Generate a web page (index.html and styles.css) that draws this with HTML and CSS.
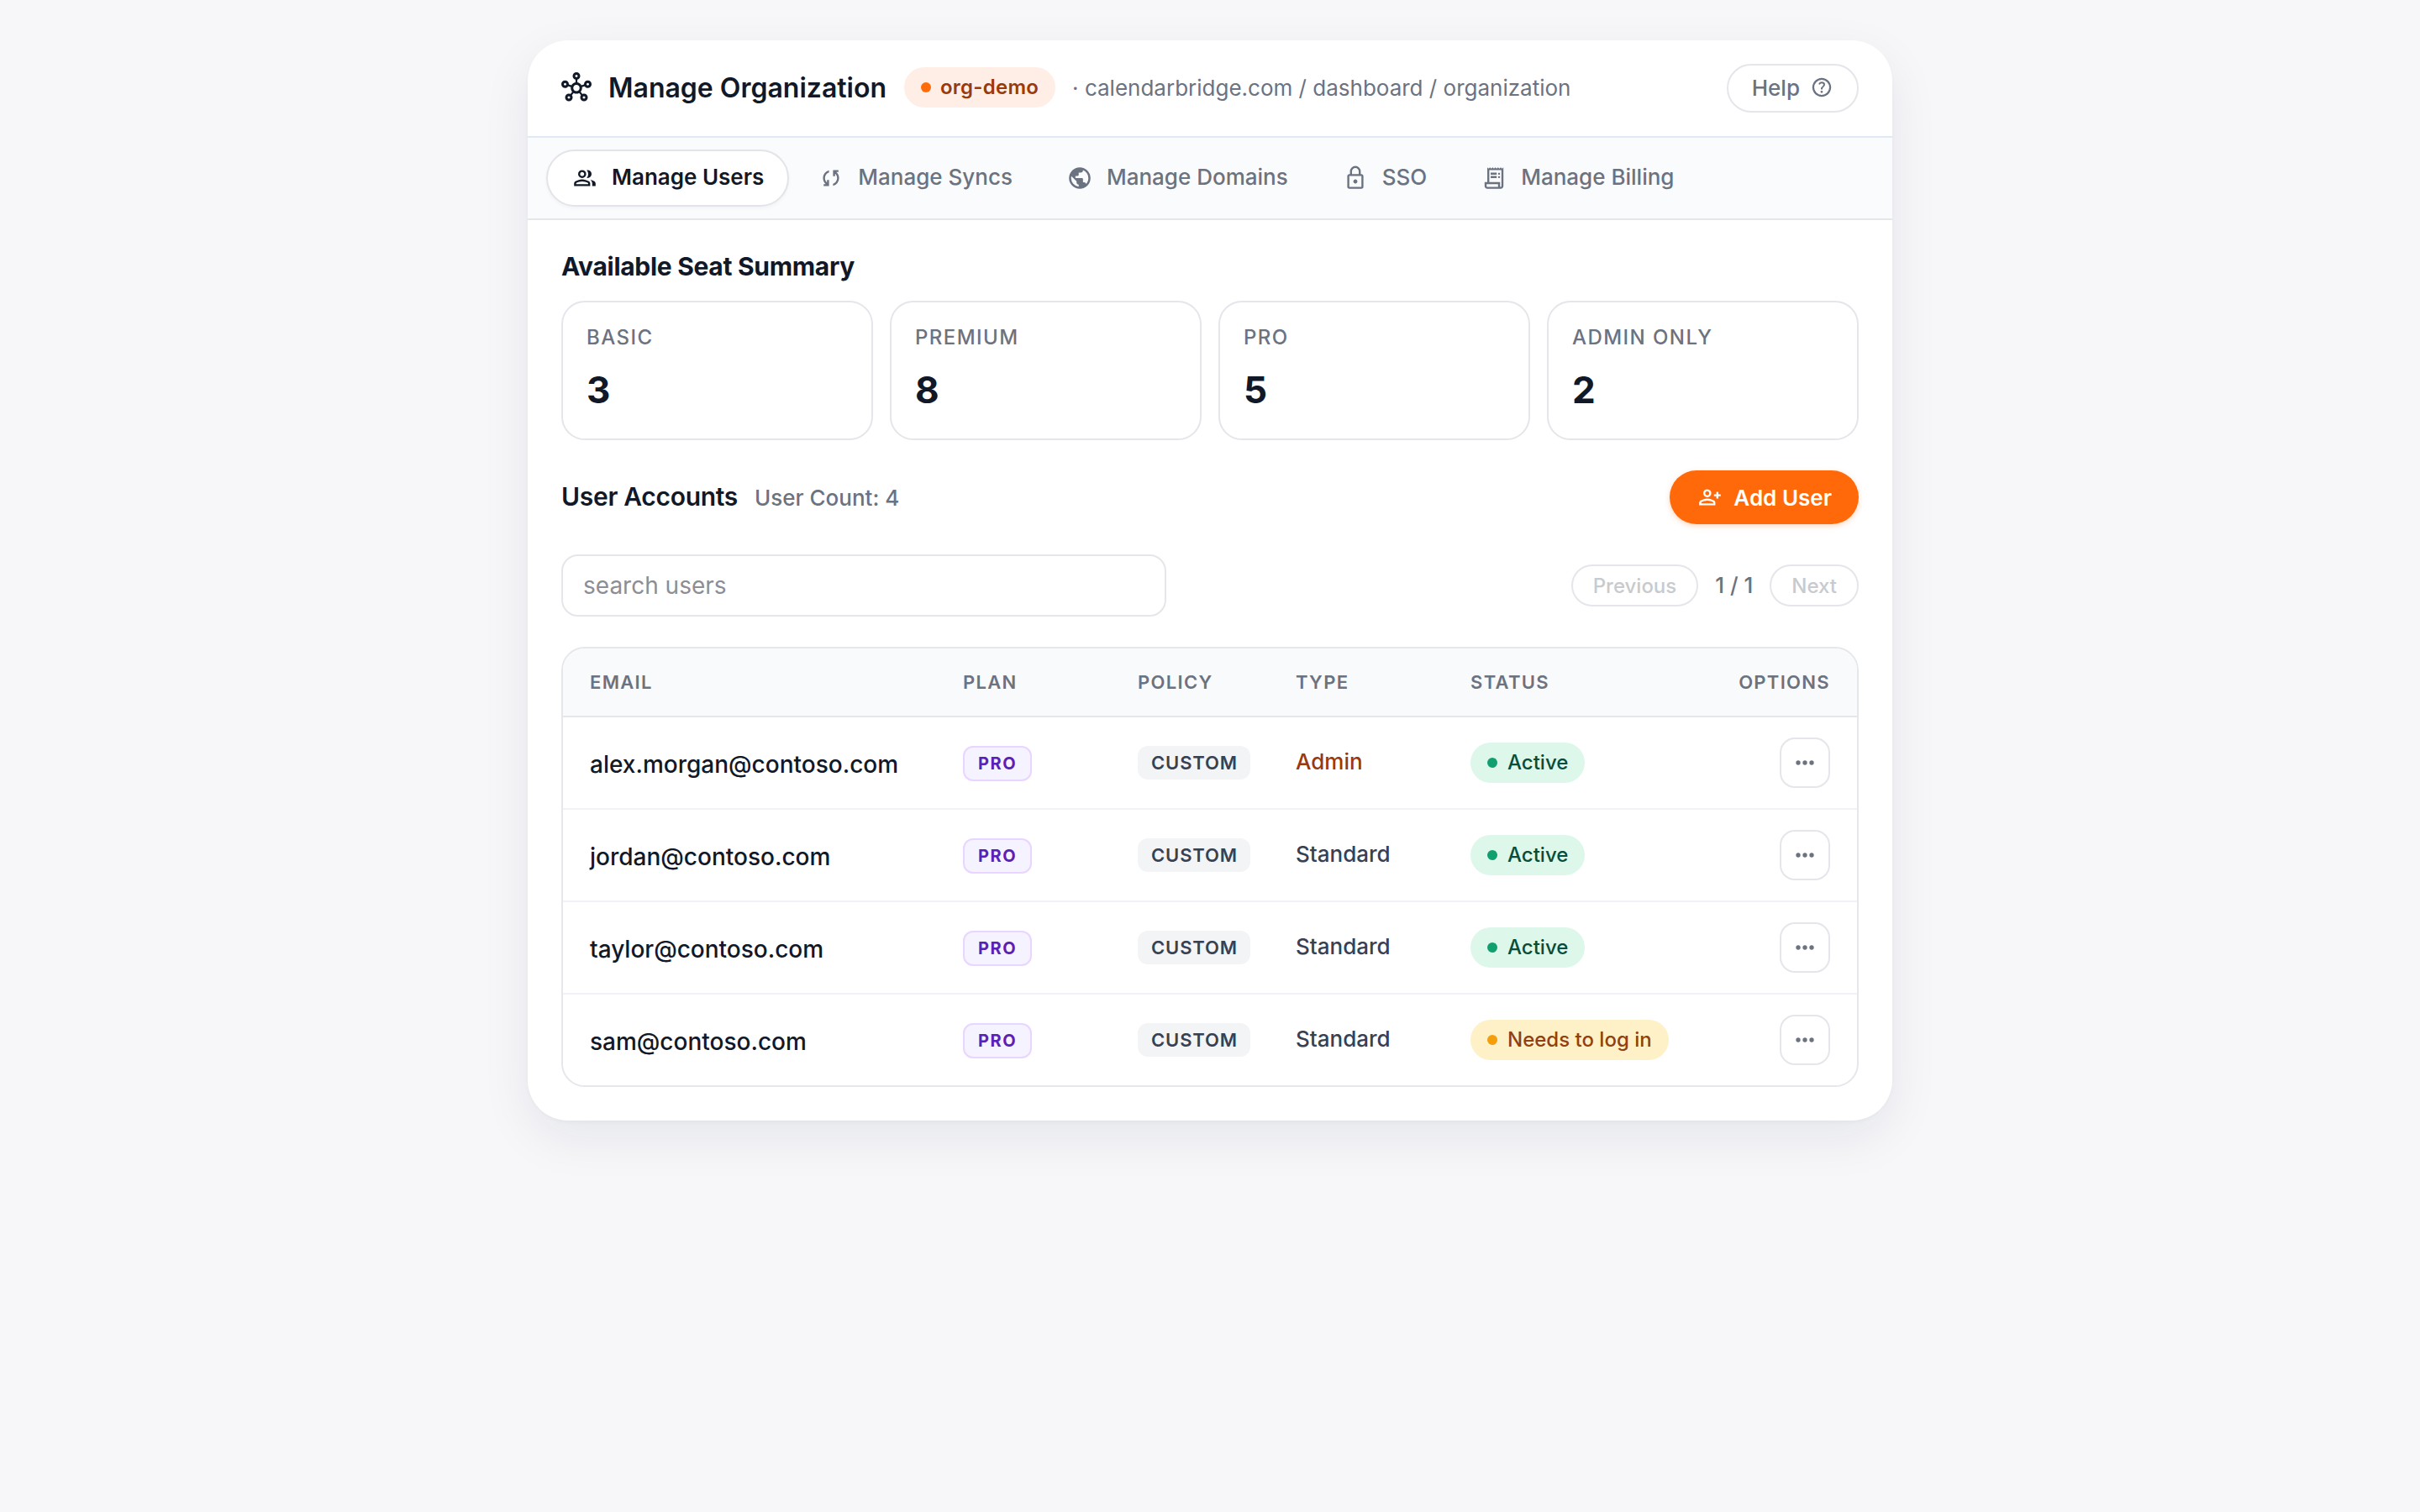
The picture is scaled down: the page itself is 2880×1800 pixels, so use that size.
FILE: index.html
```html
<!DOCTYPE html>
<html lang="en">
<head>
<meta charset="utf-8">
<title>Manage Organization</title>
<link rel="stylesheet" href="styles.css">
</head>
<body>
<svg class="sprite" aria-hidden="true">
  <symbol id="i-hub" viewBox="0 -960 960 960"><path d="M240-40q-50 0-85-35t-35-85q0-50 35-85t85-35q14 0 26 3t23 8l57-71q-28-31-39-70t-5-78l-81-27q-17 25-43 40t-58 15q-50 0-85-35T0-580q0-50 35-85t85-35q50 0 85 35t35 85v8l81 28q20-36 53.5-61t75.5-32v-87q-39-11-64.5-42.5T360-840q0-50 35-85t85-35q50 0 85 35t35 85q0 42-26 73.5T510-724v87q42 7 75.5 32t53.5 61l81-28v-8q0-50 35-85t85-35q50 0 85 35t35 85q0 50-35 85t-85 35q-32 0-58.5-15T739-515l-81 27q6 39-5 77.5T614-340l57 70q11-5 23-7.5t26-2.5q50 0 85 35t35 85q0 50-35 85t-85 35q-50 0-85-35t-35-85q0-20 6.5-38.5T624-232l-57-71q-41 23-87.5 23T392-303l-56 71q11 15 17.5 33.5T360-160q0 50-35 85t-85 35ZM120-540q17 0 28.5-11.5T160-580q0-17-11.5-28.5T120-620q-17 0-28.5 11.5T80-580q0 17 11.5 28.5T120-540Zm120 420q17 0 28.5-11.5T280-160q0-17-11.5-28.5T240-200q-17 0-28.5 11.5T200-160q0 17 11.5 28.5T240-120Zm240-680q17 0 28.5-11.5T520-840q0-17-11.5-28.5T480-880q-17 0-28.5 11.5T440-840q0 17 11.5 28.5T480-800Zm0 440q42 0 71-29t29-71q0-42-29-71t-71-29q-42 0-71 29t-29 71q0 42 29 71t71 29Zm240 240q17 0 28.5-11.5T760-160q0-17-11.5-28.5T720-200q-17 0-28.5 11.5T680-160q0 17 11.5 28.5T720-120Zm120-420q17 0 28.5-11.5T880-580q0-17-11.5-28.5T840-620q-17 0-28.5 11.5T800-580q0 17 11.5 28.5T840-540Z"/></symbol>
  <symbol id="i-help" viewBox="-20 -980 1000 1000"><path d="M478-240q21 0 35.5-14.5T528-290q0-21-14.5-35.5T478-340q-21 0-35.5 14.5T428-290q0 21 14.5 35.5T478-240Zm-36-154h74q0-33 7.5-52t42.5-52q26-26 41-49.5t15-56.5q0-56-41-86t-97-30q-57 0-92.5 30T342-618l66 26q5-18 22.5-39t53.5-21q32 0 48 17.5t16 38.5q0 20-12 37.5T506-526q-44 39-54 59t-10 73Zm38 314q-83 0-156-31.5T197-197q-54-54-85.5-127T80-480q0-83 31.5-156T197-763q54-54 127-85.5T480-880q83 0 156 31.5T763-763q54 54 85.5 127T880-480q0 83-31.5 156T763-197q-54 54-127 85.5T480-80Zm0-80q134 0 227-93t93-227q0-134-93-227t-227-93q-134 0-227 93t-93 227q0 134 93 227t227 93Z"/></symbol>
  <symbol id="i-group" viewBox="0 -960 960 960"><path d="M96-192v-92q0-26 12.500-47.500T143-366q55-32 116-49t125-17q64 0 125 17t116 49q22 13 34.500 34.500T672-284v92H96Zm648 0v-92q0-42-19.500-78T672-421q39 8 75.500 21.500T817-366q22 13 34.500 34.500T864-284v92H744Zm-360-288q-60 0-102-42t-42-102q0-60 42-102t102-42q60 0 102 42t42 102q0 60-42 102t-102 42Zm336-144q0 60-42 102t-102 42q-8 0-15-.5t-15-2.500q25-29 39.500-64.500T600-624q0-41-14.500-76.500T546-765q8-2 15-2.500t15-.5q60 0 102 42t42 102ZM168-264h432v-20q0-6-3-11.500t-8-8.500q-47-27-99-41.500T384-360q-54 0-106 14t-99 42q-5 3-8 8t-3 12v20Zm216-288q30 0 51-21t21-51q0-30-21-51t-51-21q-30 0-51 21t-21 51q0 30 21 51t51 21Z"/></symbol>
  <symbol id="i-sync" viewBox="0 -960 960 960"><path d="M216-192v-72h74q-45-40-71.500-95.500T192-480q0-101 61-178.500T408-758v75q-63 23-103.500 77.500T264-480q0 48 19.500 89t52.500 70v-94h72v223H216Zm336-10v-75q63-23 103.500-77.500T696-480q0-48-19.500-89T624-639v94h-72v-223h192v72h-74q45 40 71.500 95.500T768-480q0 101-61 178.500T552-202Z"/></symbol>
  <symbol id="i-globe" viewBox="-20 -980 1000 1000"><path d="M480-80q-83 0-156-31.5T197-197q-54-54-85.5-127T80-480q0-83 31.5-156T197-763q54-54 127-85.5T480-880q83 0 156 31.5T763-763q54 54 85.5 127T880-480q0 83-31.5 156T763-197q-54 54-127 85.5T480-80Zm-40-82v-78q-33 0-56.5-23.5T360-320v-40L168-552q-3 18-5.5 36t-2.5 36q0 121 79.5 212T440-162Zm276-102q20-22 36-47.5t26.5-53q10.5-27.5 16-56.5t5.5-59q0-98-54.5-179T600-776v16q0 33-23.5 56.5T520-680h-80v80q0 17-11.5 28.5T400-560h-80v80h240q17 0 28.5 11.5T600-440v120h40q26 0 47 15.5t29 40.5Z"/></symbol>
  <symbol id="i-lock" viewBox="0 -960 960 960"><path d="M264-96q-30 0-51-21t-21-51v-384q0-30 21-51t51-21h24v-96q0-80 56-136t136-56q80 0 136 56t56 136v96h24q30 0 51 21t21 51v384q0 30-21 51t-51 21H264Zm0-72h432v-384H264v384Zm216-120q30 0 51-21t21-51q0-30-21-51t-51-21q-30 0-51 21t-21 51q0 30 21 51t51 21ZM360-624h240v-96q0-50-35-85t-85-35q-50 0-85 35t-35 85v96Z"/></symbol>
  <symbol id="i-receipt" viewBox="0 -960 960 960"><path fill-rule="evenodd" d="M240-96q-40 0-68-28t-28-68v-144h96v-528l48 48 48-48 48 48 48-48 48 48 48-48 48 48 48-48 48 48 48-48 48 48 48-48v672q0 40-28 68t-68 28H240Zm480-72q10 0 17-7t7-17v-576H312v432h384v144q0 10 7 17t17 7ZM360-600v-72h216v72H360Zm0 120v-72h216v72H360Zm300-120q-15 0-25.500-10.500T624-636q0-15 10.500-25.500T660-672q15 0 25.500 10.500T696-636q0 15-10.500 25.500T660-600Zm0 120q-15 0-25.500-10.500T624-516q0-15 10.500-25.500T660-552q15 0 25.500 10.500T696-516q0 15-10.500 25.500T660-480ZM240-168h384v-96H216v72q0 10 7 17t17 7Z"/></symbol>
  <symbol id="i-add" viewBox="0 -960 960 960"><path d="M708-432v-84h-84v-72h84v-84h72v84h84v72h-84v84h-72Zm-324-48q-60 0-102-42t-42-102q0-60 42-102t102-42q60 0 102 42t42 102q0 60-42 102t-102 42ZM96-192v-92q0-26 12.500-47.500T143-366q55-32 116-49t125-17q64 0 125 17t116 49q22 13 34.500 34.500T672-284v92H96Zm72-72h432v-20q0-6-3-11.500t-8-8.500q-47-27-99-41.500T384-360q-54 0-106 14t-99 42q-5 3-8 8t-3 12v20Zm216-288q30 0 51-21t21-51q0-30-21-51t-51-21q-30 0-51 21t-21 51q0 30 21 51t51 21Z"/></symbol>
  <symbol id="i-more" viewBox="0 0 24 24"><circle cx="6" cy="12" r="2"/><circle cx="12" cy="12" r="2"/><circle cx="18" cy="12" r="2"/></symbol>
</svg>
<main class="card">
  <header class="header">
    <svg class="hub"><use href="#i-hub"/></svg>
    <h1 class="title">Manage Organization</h1>
    <span class="org"><i class="dot"></i><span class="pill-text">org-demo</span></span>
    <span class="crumbs">· calendarbridge.com / dashboard / organization</span>
    <button class="help">Help<svg class="help-icon"><use href="#i-help"/></svg></button>
  </header>
  <nav class="tabs">
    <a class="tab active"><svg class="icon"><use href="#i-group"/></svg><span class="tab-text">Manage Users</span></a>
    <a class="tab"><svg class="icon"><use href="#i-sync"/></svg><span class="tab-text">Manage Syncs</span></a>
    <a class="tab"><svg class="icon"><use href="#i-globe"/></svg><span class="tab-text">Manage Domains</span></a>
    <a class="tab"><svg class="icon"><use href="#i-lock"/></svg><span class="tab-text">SSO</span></a>
    <a class="tab"><svg class="icon"><use href="#i-receipt"/></svg><span class="tab-text">Manage Billing</span></a>
  </nav>
  <section class="content">
    <h2 class="heading">Available Seat Summary</h2>
    <div class="seats">
      <div class="seat"><span class="seat-label">BASIC</span><span class="seat-value">3</span></div>
      <div class="seat"><span class="seat-label">PREMIUM</span><span class="seat-value">8</span></div>
      <div class="seat"><span class="seat-label">PRO</span><span class="seat-value">5</span></div>
      <div class="seat"><span class="seat-label">ADMIN ONLY</span><span class="seat-value">2</span></div>
    </div>
    <div class="accounts">
      <div class="accounts-title"><h2 class="heading accounts-heading">User Accounts</h2><span class="count">User Count: 4</span></div>
      <button class="add"><svg class="icon"><use href="#i-add"/></svg>Add User</button>
    </div>
    <div class="toolbar">
      <input class="search" type="text" placeholder="search users">
      <div class="pager"><button class="page" disabled>Previous</button><span class="pages">1 / 1</span><button class="page" disabled>Next</button></div>
    </div>
    <div class="table-wrap">
      <table class="table">
        <colgroup><col class="c-email"><col class="c-plan"><col class="c-policy"><col class="c-type"><col><col class="c-options"></colgroup>
        <thead>
          <tr><th>EMAIL</th><th>PLAN</th><th>POLICY</th><th>TYPE</th><th>STATUS</th><th class="right">OPTIONS</th></tr>
        </thead>
        <tbody>
          <tr><td class="email">alex.morgan@contoso.com</td><td><span class="plan">PRO</span></td><td><span class="policy">CUSTOM</span></td><td class="type admin">Admin</td><td><span class="status ok"><i class="dot"></i><span class="pill-text">Active</span></span></td><td><button class="more" aria-label="Options"><svg class="more-icon"><use href="#i-more"/></svg></button></td></tr>
          <tr><td class="email">jordan@contoso.com</td><td><span class="plan">PRO</span></td><td><span class="policy">CUSTOM</span></td><td class="type">Standard</td><td><span class="status ok"><i class="dot"></i><span class="pill-text">Active</span></span></td><td><button class="more" aria-label="Options"><svg class="more-icon"><use href="#i-more"/></svg></button></td></tr>
          <tr><td class="email">taylor@contoso.com</td><td><span class="plan">PRO</span></td><td><span class="policy">CUSTOM</span></td><td class="type">Standard</td><td><span class="status ok"><i class="dot"></i><span class="pill-text">Active</span></span></td><td><button class="more" aria-label="Options"><svg class="more-icon"><use href="#i-more"/></svg></button></td></tr>
          <tr><td class="email">sam@contoso.com</td><td><span class="plan">PRO</span></td><td><span class="policy">CUSTOM</span></td><td class="type">Standard</td><td><span class="status warn"><i class="dot"></i><span class="pill-text">Needs to log in</span></span></td><td><button class="more" aria-label="Options"><svg class="more-icon"><use href="#i-more"/></svg></button></td></tr>
        </tbody>
      </table>
    </div>
  </section>
</main>
</body>
</html>
```
FILE: styles.css
```css
* { box-sizing: border-box; }
body {
  margin: 0;
  min-height: 100vh;
  padding-top: 48px;
  background: #f7f7fa;
  color: #111827;
  font-family: Inter, "Liberation Sans", sans-serif;
  font-size: 26px;
}
svg { display: block; flex: none; fill: currentColor; }
.sprite { display: none; }
button, input { font: inherit; margin: 0; }

.card {
  width: 1624px;
  margin: 0 auto;
  background: #fff;
  border-radius: 48px;
  overflow: hidden;
  box-shadow: 0 20px 60px rgba(17, 24, 39, .075), 0 2px 4px rgba(17, 24, 39, .03);
}

.header {
  display: flex;
  align-items: center;
  height: 116px;
  padding: 0 40px;
  border-bottom: 2px solid #e0e9f5;
}
.hub { width: 36px; height: 36px; margin-bottom: 2px; }
.title { margin: 0 0 0 20px; font-size: 32px; font-weight: 600; line-height: 40px; white-space: nowrap; }
.org {
  display: flex;
  align-items: center;
  gap: 11px;
  height: 48px;
  margin: 0 20px 2px 21px;
  padding: 0 20px;
  border-radius: 24px;
  background: #ffeee6;
  color: #9a3a0c;
  font-size: 24px;
  font-weight: 600;
  letter-spacing: .01em;
}
.dot { width: 12px; height: 12px; border-radius: 50%; background: #ff6a0a; }
.pill-text { margin-bottom: 1px; }
.crumbs { margin-bottom: 1px; color: #6b7280; }
.help {
  display: flex;
  align-items: center;
  gap: 12px;
  height: 58px;
  margin-left: auto;
  padding: 0 28px 2px;
  border: 2px solid #e5e5eb;
  border-radius: 29px;
  background: #fff;
  color: #6b7280;
  font-weight: 500;
}
.help-icon { width: 28px; height: 28px; }

.tabs {
  display: flex;
  gap: 4px;
  height: 98px;
  padding: 14px 22px;
  background: #fafbfd;
  border-bottom: 2px solid #e5e7eb;
}
.tab {
  display: flex;
  align-items: center;
  gap: 16px;
  height: 68px;
  padding: 0 28px;
  border: 2px solid transparent;
  border-radius: 34px;
  color: #6b7280;
  font-weight: 500;
}
.tab.active {
  background: #fff;
  border-color: #e3e4e9;
  color: #111827;
  font-weight: 600;
  box-shadow: 0 2px 4px rgba(17, 24, 39, .04);
}
.tab-text { margin-bottom: 3px; }
.icon { width: 32px; height: 32px; }

.content { padding: 32px 40px 40px; }
.heading { margin: 0; font-size: 30px; font-weight: 650; line-height: 46px; letter-spacing: -.01em; }
.seats { display: grid; grid-template-columns: repeat(4, 1fr); gap: 20px; margin-top: 18px; }
.seat {
  display: flex;
  flex-direction: column;
  height: 166px;
  padding: 25px 28px 24px;
  border: 2px solid #e5e5eb;
  border-radius: 28px;
}
.seat-label { color: #6b7280; font-size: 24px; font-weight: 500; line-height: 34px; letter-spacing: .06em; }
.seat-value { margin-top: 11px; font-size: 44px; font-weight: 700; line-height: 68px; }

.accounts { display: flex; align-items: center; justify-content: space-between; height: 64px; margin-top: 36px; }
.accounts-title { display: flex; align-items: baseline; gap: 20px; margin-bottom: 2px; }
.accounts-heading { font-weight: 600; }
.count { color: #6b7280; font-weight: 500; }
.add {
  display: flex;
  align-items: center;
  gap: 12px;
  height: 64px;
  padding: 0 32px;
  border: 0;
  border-radius: 32px;
  background: #ff690a;
  color: #fff;
  font-weight: 600;
  box-shadow: 0 2px 6px rgba(255, 105, 10, .28);
}

.toolbar { display: flex; align-items: center; justify-content: space-between; margin-top: 36px; }
.search {
  width: 720px;
  height: 74px;
  padding: 0 24px;
  border: 2px solid #e5e5eb;
  border-radius: 20px;
  background: #fff;
  font-size: 28px;
}
.search::placeholder { color: #8b8e94; opacity: 1; }
.pager { display: flex; align-items: center; gap: 20px; }
.page {
  height: 50px;
  padding: 0 24px;
  border: 2px solid #e5e5eb;
  border-radius: 25px;
  background: #fff;
  color: #c8cacd;
  font-size: 24px;
  font-weight: 500;
}
.pages { margin-bottom: 1px; color: #6b7280; font-weight: 500; }

.table-wrap { margin-top: 36px; border: 2px solid #e5e7eb; border-radius: 28px; overflow: hidden; }
.table { width: 100%; table-layout: fixed; border-collapse: separate; border-spacing: 0; }
.c-email { width: 444px; }
.c-plan { width: 208px; }
.c-policy { width: 188px; }
.c-type { width: 208px; }
.c-options { width: 200px; }
th {
  height: 82px;
  padding: 0 32px;
  border-bottom: 2px solid #e5e7eb;
  background: #f9fafc;
  color: #6b7280;
  font-size: 22px;
  font-weight: 600;
  letter-spacing: .06em;
  text-align: left;
}
th.right { text-align: right; }
td { height: 110px; padding: 0 0 0 32px; border-bottom: 2px solid #f1f2f6; vertical-align: middle; }
td:last-child { padding-right: 32px; }
tr:last-child td { height: 108px; border-bottom: 0; }
.email { padding-top: 4px; font-size: 28px; font-weight: 500; }
.type { padding-bottom: 3px; color: #374151; font-weight: 500; }
.type.admin { color: #9a3a0c; }
.plan, .policy, .status { display: flex; align-items: center; width: max-content; }
.plan {
  height: 42px;
  margin-top: 2px;
  padding: 0 16px;
  border: 2px solid #e9d5ff;
  border-radius: 12px;
  background: #f5f3ff;
  color: #5b21b6;
  font-size: 20px;
  font-weight: 700;
  letter-spacing: .08em;
}
.policy {
  height: 40px;
  padding: 0 15px 0 16px;
  border-radius: 12px;
  background: #f3f4f6;
  color: #374151;
  font-size: 22px;
  font-weight: 600;
  letter-spacing: .04em;
}
.status { gap: 12px; height: 48px; padding: 0 20px; border-radius: 24px; font-size: 24px; font-weight: 500; }
.status.ok { background: #ddf7ea; color: #064e3b; }
.status.ok .dot { background: #10a070; }
.status.warn { background: #fef1c7; color: #92400e; }
.status.warn .dot { background: #f59e0b; }
.more {
  display: grid;
  place-items: center;
  width: 60px;
  height: 60px;
  margin-left: auto;
  padding: 0;
  border: 2px solid #e5e5eb;
  border-radius: 18px;
  background: #fff;
  color: #6b7280;
}
.more-icon { width: 32px; height: 32px; }
```
